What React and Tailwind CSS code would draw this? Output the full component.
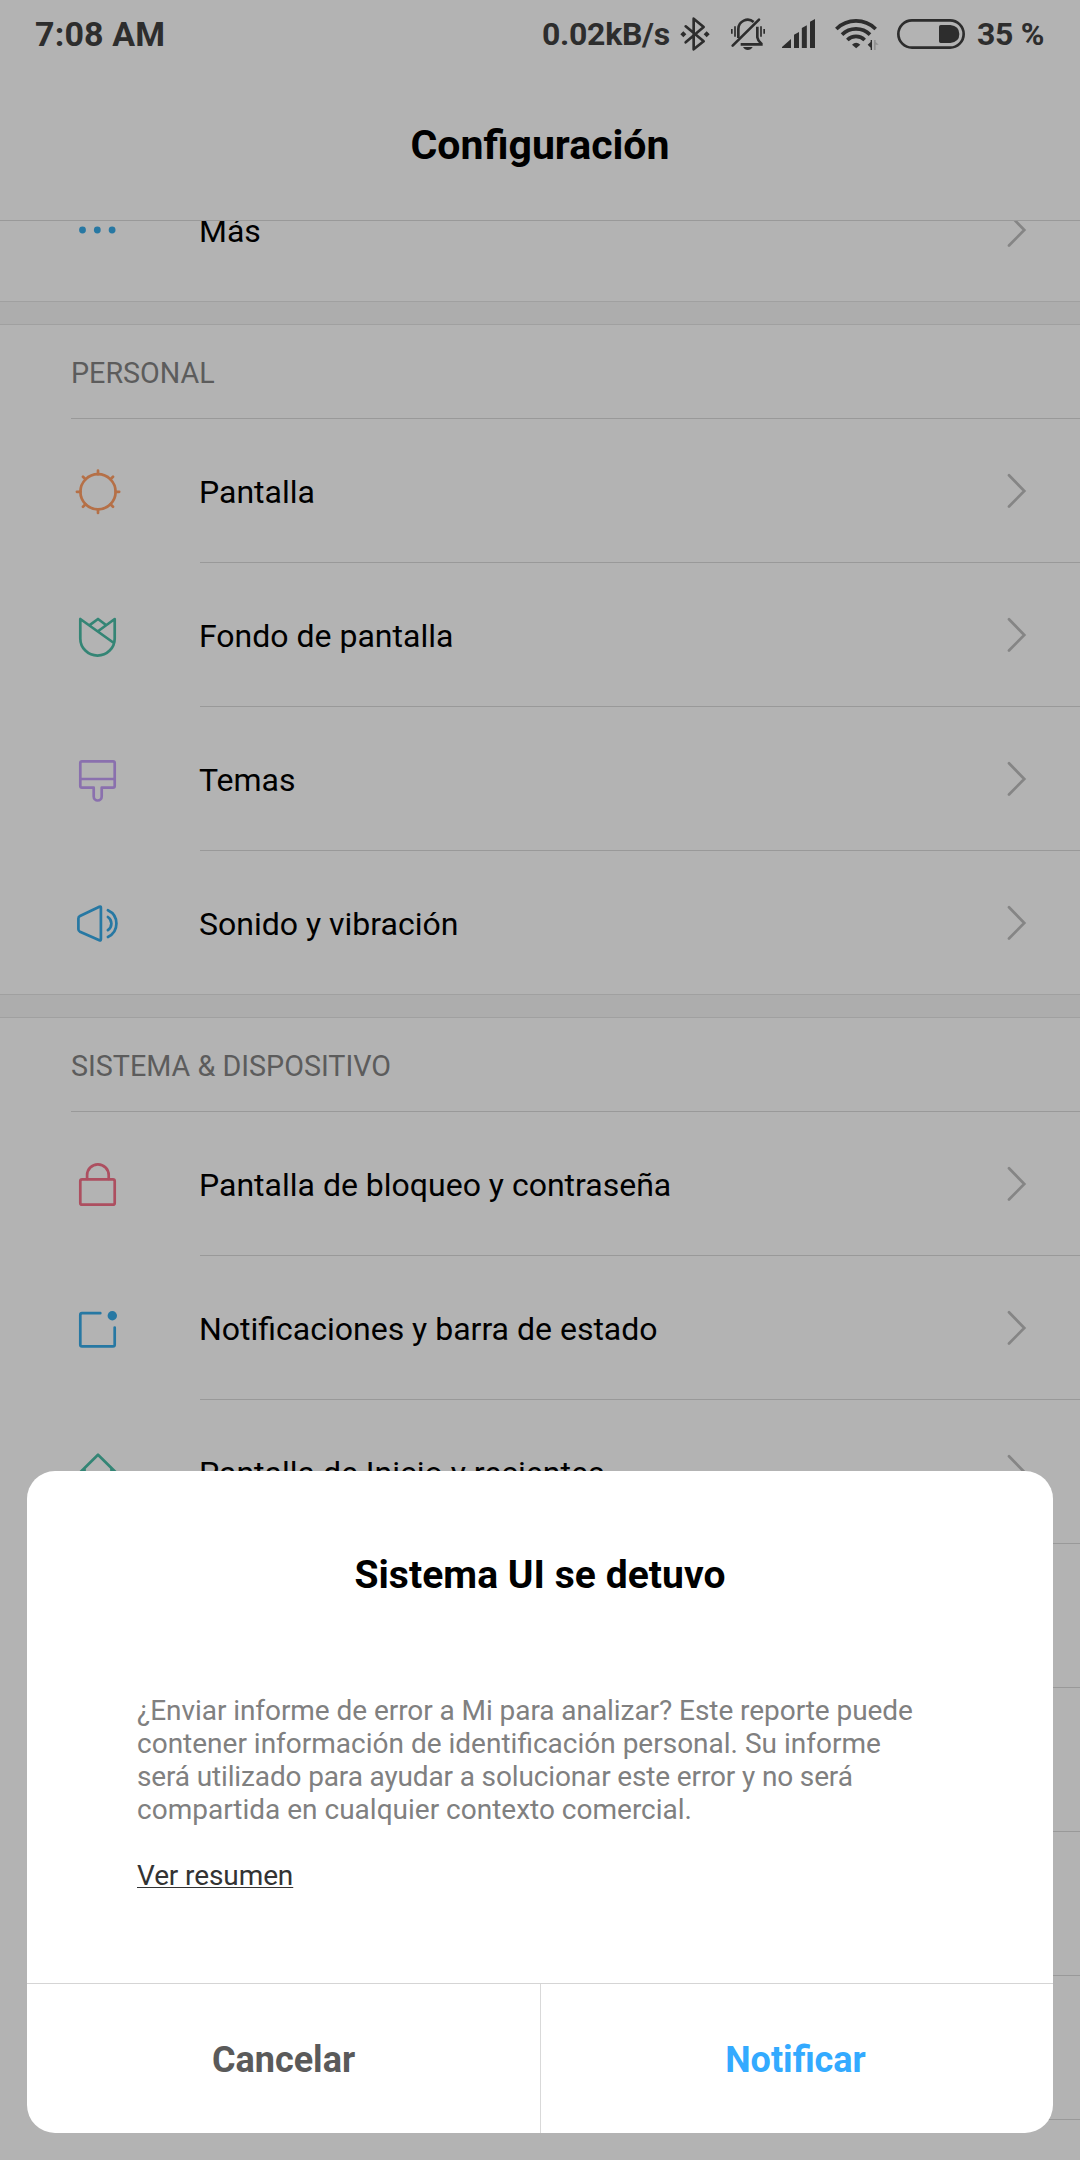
const ICON_PATHS = {
  more: (
    <g fill="#2778a3">
      <circle cx="14.5" cy="31" r="3.4" />
      <circle cx="29.3" cy="31" r="3.4" />
      <circle cx="44.1" cy="31" r="3.4" />
    </g>
  ),
  display: (
    <g stroke="#b57047">
      <circle cx="30" cy="31.8" r="17.6" />
      <path d="M30 10.6v3.6M30 49.4v3.6M8.9 31.8h3.6M47.6 31.8h3.6M15 16.8l2.5 2.5M42.5 44.3l2.5 2.5M45 16.8l-2.5 2.5M17.5 44.3l-2.5 2.5" />
    </g>
  ),
  wallpaper: (
    <path
      stroke="#348575"
      d="M12.3 15v19.4a17.2 17.2 0 0 0 34.4 0V15L30.3 27M12.3 15l33.6 24M22 20.8l8-5.8 8 6"
    />
  ),
  themes: (
    <path
      stroke="#8a70ae"
      d="M14 13.3h31q1.7 0 1.7 1.7v23q0 1.7-1.7 1.7H33.7V48.5a4 4 0 0 1-8 0V39.7H14q-1.7 0-1.7-1.7V15q0-1.7 1.7-1.7zM12.3 31h34.4"
    />
  ),
  sound: (
    <path
      stroke="#2778a3"
      d="M12 24l19.4-9.3q1.5-.6 1.5 1v31.6q0 1.6-1.5 1L12 39.7q-1.6-.8-1.6-2.4V26.4q0-1.6 1.6-2.4zM39.9 25a8 8 0 0 1 0 13.2M39.9 18.200a14.800 14.800 0 0 1 0 26.800"
    />
  ),
  lock: (
    <g stroke="#ad4f60">
      <rect x="12.3" y="26.3" width="34.4" height="25.4" rx="1.8" />
      <path d="M19.1 26V22.2a10.8 10.8 0 0 1 21.6 0V26" />
    </g>
  ),
  notifications: (
    <g stroke="#2778a3">
      <path d="M32.3 16.2H14q-1.7 0-1.7 1.7V47.7q0 1.7 1.7 1.7h31q1.7 0 1.7-1.7V30.5" />
      <circle cx="44.3" cy="18.7" r="4.7" fill="#2778a3" stroke="none" />
    </g>
  ),
  home: <path stroke="#348575" d="M9 34.5L30 13.7l21 20.8M16.5 27.5V50h27V27.5" />,
};

function RowIcon({ name }) {
  return (
    <svg
      className="ml-[68px] h-[61px] w-[61px] shrink-0"
      viewBox="0 0 61 61"
      fill="none"
      strokeWidth="2.7"
      strokeLinecap="round"
      strokeLinejoin="round"
    >
      {ICON_PATHS[name]}
    </svg>
  );
}

function Row({ icon, label, last }) {
  return (
    <div className={`flex h-36 shrink-0 ${last ? "border-b border-[#a0a0a0]" : ""}`}>
      <div className="flex h-[143px] w-[200px] shrink-0 items-center">
        {icon && <RowIcon name={icon} />}
      </div>
      <div
        className={`flex flex-1 items-center justify-between pr-[53px] ${
          last ? "" : "border-b border-[#999999]"
        }`}
      >
        <span className="-ml-px pt-[3px] text-[32px] leading-[38px] text-black">{label}</span>
        {icon && (
          <svg
            className="h-[35px] w-5"
            viewBox="0 0 20 35"
            fill="none"
            stroke="#858585"
            strokeWidth="2.7"
            strokeLinecap="round"
          >
            <path d="M2 2.3L17.3 18 2 33.5" />
          </svg>
        )}
      </div>
    </div>
  );
}

function Section({ title, rows }) {
  return (
    <section className="shrink-0">
      <div className="h-[23px] border-b border-[#a0a0a0] bg-[#adadad]" />
      <div className="ml-[71px] flex h-[94px] items-center border-b border-[#999999]">
        <h2 className="pt-[3px] text-[28.7px] leading-[34px] text-[#5c5c5c]">{title}</h2>
      </div>
      {rows.map((row, i) => (
        <Row key={i} {...row} />
      ))}
    </section>
  );
}

function StatusBar() {
  return (
    <div className="flex h-[68px] items-center pl-[35px] text-[#2d2d2d]">
      <span className="w-[507px] text-[34px] leading-10 font-bold tracking-[0.15px]">7:08 AM</span>
      <span className="w-[138px] text-[32px] leading-10 font-bold tracking-[-0.3px]">0.02kB/s</span>
      <svg className="h-9 w-[30px]" viewBox="480 45 90 108" fill="none" stroke="#2d2d2d" strokeWidth="8" strokeLinejoin="round" strokeLinecap="round">
        <path d="M497 76l54 45-30 24V53l30 25-54 46" />
        <path d="M490 91l9 9-9 9-9-9zM560 91l9 9-9 9-9-9z" fill="#2d2d2d" stroke="none" />
      </svg>
      <svg className="ml-[19px] h-9 w-[38px]" viewBox="627 45 114 108" fill="none" stroke="#2d2d2d" strokeWidth="6">
        <path d="M638 134l79-78" strokeWidth="8" strokeLinecap="round" />
        <path d="M655 111V84a28 28 0 0 1 46-21M712 77v32q1 9 12 19v2H662" strokeWidth="8" />
        <path d="M669 138h29q-5 9-14.5 9t-14.5-9z" fill="#2d2d2d" stroke="none" />
        <path d="M635.5 84v14M645 76v31M723 76v31M732.5 84v14" strokeWidth="5" />
      </svg>
      <svg className="ml-[15px] h-9 w-[34px]" viewBox="786 45 102 108" fill="#2d2d2d">
        <path d="M786 141v-3l27-24v27zM822 141v-40l15-8v48zM845.5 141V81l15-8v68zM870 141V62l15-8v87z" />
      </svg>
      <svg className="ml-[18px] h-9 w-[46px]" viewBox="102 45 138 108" fill="none" stroke="#2d2d2d" strokeWidth="11">
        <path d="M109 84a84 84 0 0 1 118 0M126 101a60 60 0 0 1 84 0M142 117a37 37 0 0 1 52 0" />
        <path d="M156 131q12-12 25 0l-12.5 11z" fill="#2d2d2d" stroke="none" />
        <path d="M216 117v30h-4v-7l-9-9 9-8v-6z" fill="#2d2d2d" stroke="none" />
        <path d="M222 117h5v6l9 8h-9v16h-5z" fill="#929292" stroke="none" />
      </svg>
      <svg className="ml-[16px] h-9 w-[70px]" viewBox="288 45 210 108" fill="none">
        <rect x="295" y="58" width="196" height="82" rx="41" stroke="#2d2d2d" strokeWidth="8" />
        <path d="M422 72h29q27 3 27 27t-27 27h-29q-5 0-5-5V77q0-5 5-5z" fill="#2d2d2d" />
      </svg>
      <span className="ml-[11px] text-[32px] leading-10 font-bold tracking-[-0.3px] whitespace-nowrap">35 %</span>
    </div>
  );
}

function Dialog() {
  return (
    <div className="absolute top-[1471px] left-[27px] flex h-[662px] w-[1026px] flex-col overflow-hidden rounded-[28px] bg-white">
      <h2 className="pt-[79px] text-center text-[39px] leading-[50px] font-bold tracking-[0.05px] text-black">
        Sistema UI se detuvo
      </h2>
      <div className="flex-1 pt-[94px] pl-[110px] text-[28px] leading-[33px]">
        <p className="whitespace-nowrap text-[#808080]">
          <span className="tracking-[-0.06px]">
            ¿Enviar informe de error a Mi para analizar? Este reporte puede
          </span>
          <br />
          contener información de identificación personal. Su informe
          <br />
          <span className="tracking-[-0.14px]">
            será utilizado para ayudar a solucionar este error y no será
          </span>
          <br />
          compartida en cualquier contexto comercial.
        </p>
        <a className="mt-[33px] inline-block tracking-[-0.1px] text-[#333333] underline decoration-1 underline-offset-2">
          Ver resumen
        </a>
      </div>
      <div className="flex h-[150px] border-t border-[#d5d5d5] text-[36px] font-bold">
        <button className="w-[513px] pt-[3px] text-[#5a5a5a]">Cancelar</button>
        <button className="flex-1 border-l border-[#d9d9d9] pt-[3px] pr-[3px] text-[#33aaff]">Notificar</button>
      </div>
    </div>
  );
}

export default function App() {
  return (
    <div className="relative flex h-[2160px] w-[1080px] flex-col overflow-hidden bg-[#b3b3b3] font-['Roboto',sans-serif]">
      <header className="h-[221px] shrink-0 border-b border-[#999999]">
        <StatusBar />
        <h1 className="pt-[52px] text-center text-[41px] leading-[50px] font-bold text-black">
          Configuración
        </h1>
      </header>
      <main className="flex flex-1 flex-col overflow-hidden">
        <div className="-mt-[63px] shrink-0">
          <Row icon="more" label="Más" last />
        </div>
        <Section
          title="PERSONAL"
          rows={[
            { icon: "display", label: "Pantalla" },
            { icon: "wallpaper", label: "Fondo de pantalla" },
            { icon: "themes", label: "Temas" },
            { icon: "sound", label: "Sonido y vibración", last: true },
          ]}
        />
        <Section
          title="SISTEMA & DISPOSITIVO"
          rows={[
            { icon: "lock", label: "Pantalla de bloqueo y contraseña" },
            { icon: "notifications", label: "Notificaciones y barra de estado" },
            { icon: "home", label: "Pantalla de Inicio y recientes" },
            {},
            {},
            {},
            {},
          ]}
        />
      </main>
      <Dialog />
    </div>
  );
}
